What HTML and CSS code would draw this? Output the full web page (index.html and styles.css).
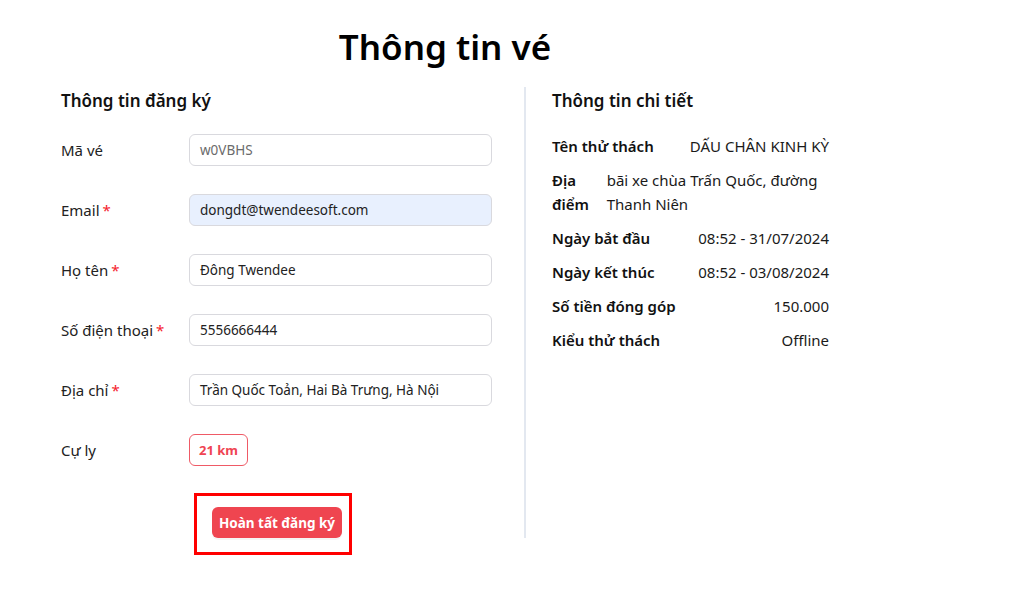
FILE: index.html
```html
<!DOCTYPE html>
<html lang="vi">
<head>
<meta charset="utf-8">
<title>Thông tin vé</title>
<link rel="stylesheet" href="styles.css">
</head>
<body>
<div class="page">
  <h1 class="title">Thông tin vé</h1>
  <div class="columns">
    <section class="left">
      <h2 class="section-title">Thông tin đăng ký</h2>
      <div class="form">
        <div class="row">
          <label class="label">Mã vé</label>
          <div class="input disabled">w0VBHS</div>
        </div>
        <div class="row">
          <label class="label">Email<span class="req">*</span></label>
          <div class="input autofill">dongdt@twendeesoft.com</div>
        </div>
        <div class="row">
          <label class="label">Họ tên<span class="req">*</span></label>
          <div class="input">Đông Twendee</div>
        </div>
        <div class="row">
          <label class="label">Số điện thoại<span class="req">*</span></label>
          <div class="input">5556666444</div>
        </div>
        <div class="row">
          <label class="label">Địa chỉ<span class="req">*</span></label>
          <div class="input">Trần Quốc Toản, Hai Bà Trưng, Hà Nội</div>
        </div>
        <div class="row">
          <label class="label">Cự ly</label>
          <div class="badge">21 km</div>
        </div>
      </div>
      <div class="highlight">
        <button class="btn">Hoàn tất đăng ký</button>
      </div>
    </section>
    <div class="divider"></div>
    <section class="right">
      <h2 class="section-title">Thông tin chi tiết</h2>
      <div class="details">
        <div class="drow"><span class="dlabel">Tên thử thách</span><span class="dvalue">DẤU CHÂN KINH KỲ</span></div>
        <div class="drow"><span class="dlabel">Địa điểm</span><span class="dvalue">bãi xe chùa Trấn Quốc, đường Thanh Niên</span></div>
        <div class="drow"><span class="dlabel">Ngày bắt đầu</span><span class="dvalue">08:52 - 31/07/2024</span></div>
        <div class="drow"><span class="dlabel">Ngày kết thúc</span><span class="dvalue">08:52 - 03/08/2024</span></div>
        <div class="drow"><span class="dlabel">Số tiền đóng góp</span><span class="dvalue">150.000</span></div>
        <div class="drow"><span class="dlabel">Kiểu thử thách</span><span class="dvalue">Offline</span></div>
      </div>
    </section>
  </div>
</div>
</body>
</html>
```
FILE: styles.css
```css
* { box-sizing: border-box; }
body {
  margin: 0;
  background: #fff;
  font-family: "Noto Sans", "Open Sans", sans-serif;
  color: #1f1f1f;
}
.page {
  width: 768px;
  margin-left: 61px;
  padding-top: 25px;
}
.title {
  margin: 0;
  text-align: center;
  font-size: 35px;
  line-height: 44px;
  font-weight: 600;
  color: #000;
}
.columns {
  display: flex;
  margin-top: 18px;
}
.left {
  width: 431px;
}
.divider {
  width: 2px;
  height: 451px;
  background: #e3e8f0;
  margin-left: 32px;
  margin-right: 26px;
}
.right {
  width: 277px;
}
.section-title {
  margin: 0;
  font-size: 17px;
  line-height: 28px;
  font-weight: 600;
  color: #111;
}
.form {
  margin-top: 19px;
  display: flex;
  flex-direction: column;
  gap: 28px;
}
.row {
  display: flex;
  align-items: center;
  height: 32px;
}
.label {
  width: 128px;
  font-size: 15px;
  color: #222;
}
.req {
  color: #f5222d;
  margin-left: 3px;
}
.input {
  width: 303px;
  height: 32px;
  border: 1px solid #d9d9de;
  border-radius: 6px;
  padding: 0 10px;
  font-size: 13.5px;
  line-height: 30px;
  color: #222;
  white-space: nowrap;
}
.input.disabled {
  color: #6b6b6b;
}
.input.autofill {
  background: #e8f0fe;
}
.badge {
  height: 32px;
  padding: 0 9px;
  border: 1px solid #ef5a66;
  border-radius: 6px;
  color: #ef4452;
  font-weight: 700;
  font-size: 13px;
  line-height: 30px;
}
.highlight {
  margin-top: 27px;
  margin-left: 133px;
  width: 158px;
  height: 62px;
  border: 3px solid #ff0000;
  padding: 11px 6px 0 15px;
}
.btn {
  height: 31px;
  width: 130px;
  padding: 0;
  border: none;
  border-radius: 6px;
  background: #ef4550;
  color: #fff;
  font-family: inherit;
  font-weight: 700;
  font-size: 13.5px;
  box-shadow: 0 2px 0 rgba(0,0,0,0.04);
}
.details {
  margin-top: 19px;
  display: flex;
  flex-direction: column;
  gap: 10px;
}
.drow {
  display: flex;
  justify-content: space-between;
  gap: 6px;
  font-size: 15px;
  line-height: 24px;
}
.dlabel {
  font-weight: 600;
  color: #111;
}
.dvalue {
  color: #1a1a1a;
}
```
